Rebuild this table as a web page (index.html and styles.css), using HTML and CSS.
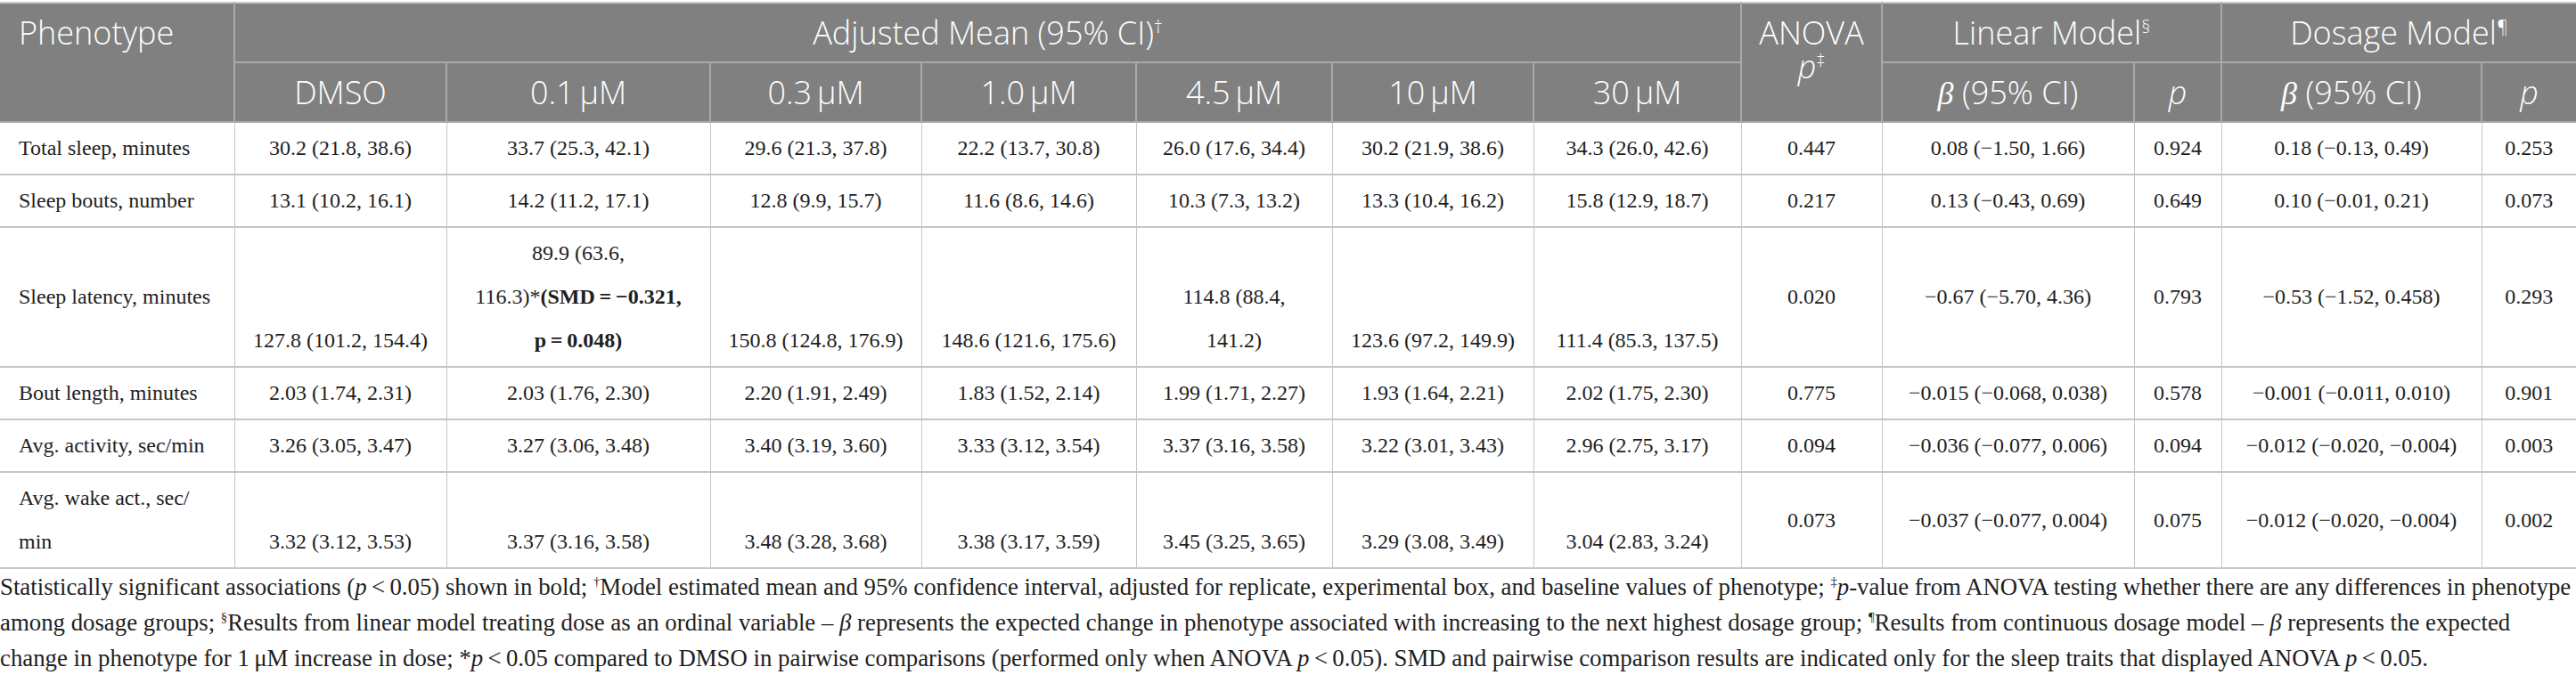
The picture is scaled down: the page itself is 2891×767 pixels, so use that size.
FILE: index.html
```html
<!DOCTYPE html>
<html lang="en">

<head>
    <meta charset="UTF-8">
    <meta name="viewport" content="width=device-width, initial-scale=1.0">
    <title>Sleep phenotypes by dose</title>
    <link rel="stylesheet" href="styles.css">
</head>

<body>
    <div class="page">
        <table class="results">
            <colgroup>
                <col class="w-label">
                <col class="w-dmso">
                <col class="w-01">
                <col class="w-03">
                <col class="w-10">
                <col class="w-45">
                <col class="w-100">
                <col class="w-300">
                <col class="w-anova">
                <col class="w-lin">
                <col class="w-linp">
                <col class="w-dos">
                <col class="w-dosp">
            </colgroup>
            <thead>
                <tr>
                    <th class="label" rowspan="2">Phenotype</th>
                    <th colspan="7">Adjusted Mean (95% CI)<sup>†</sup></th>
                    <th rowspan="2">ANOVA<br><i>p</i><sup>‡</sup></th>
                    <th colspan="2">Linear Model<sup>§</sup></th>
                    <th colspan="2">Dosage Model<sup>¶</sup></th>
                </tr>
                <tr>
                    <th>DMSO</th>
                    <th>0.1&#8201;μM</th>
                    <th>0.3&#8201;μM</th>
                    <th>1.0&#8201;μM</th>
                    <th>4.5&#8201;μM</th>
                    <th>10&#8201;μM</th>
                    <th>30&#8201;μM</th>
                    <th><i class="beta">β</i> (95% CI)</th>
                    <th><i>p</i></th>
                    <th><i class="beta">β</i> (95% CI)</th>
                    <th><i>p</i></th>
                </tr>
            </thead>
            <tbody>
                <tr>
                    <td class="label">Total sleep, minutes</td>
                    <td class="mean">30.2 (21.8, 38.6)</td>
                    <td class="mean">33.7 (25.3, 42.1)</td>
                    <td class="mean">29.6 (21.3, 37.8)</td>
                    <td class="mean">22.2 (13.7, 30.8)</td>
                    <td class="mean">26.0 (17.6, 34.4)</td>
                    <td class="mean">30.2 (21.9, 38.6)</td>
                    <td class="mean">34.3 (26.0, 42.6)</td>
                    <td>0.447</td>
                    <td>0.08 (−1.50, 1.66)</td>
                    <td>0.924</td>
                    <td>0.18 (−0.13, 0.49)</td>
                    <td>0.253</td>
                </tr>
                <tr>
                    <td class="label">Sleep bouts, number</td>
                    <td class="mean">13.1 (10.2, 16.1)</td>
                    <td class="mean">14.2 (11.2, 17.1)</td>
                    <td class="mean">12.8 (9.9, 15.7)</td>
                    <td class="mean">11.6 (8.6, 14.6)</td>
                    <td class="mean">10.3 (7.3, 13.2)</td>
                    <td class="mean">13.3 (10.4, 16.2)</td>
                    <td class="mean">15.8 (12.9, 18.7)</td>
                    <td>0.217</td>
                    <td>0.13 (−0.43, 0.69)</td>
                    <td>0.649</td>
                    <td>0.10 (−0.01, 0.21)</td>
                    <td>0.073</td>
                </tr>
                <tr>
                    <td class="label">Sleep latency, minutes</td>
                    <td class="mean">127.8 (101.2, 154.4)</td>
                    <td class="mean">89.9 (63.6,<br>116.3)*<b>(SMD&#8239;=&#8239;−0.321,<br>p&#8239;=&#8239;0.048)</b></td>
                    <td class="mean">150.8 (124.8, 176.9)</td>
                    <td class="mean">148.6 (121.6, 175.6)</td>
                    <td class="mean">114.8 (88.4,<br>141.2)</td>
                    <td class="mean">123.6 (97.2, 149.9)</td>
                    <td class="mean">111.4 (85.3, 137.5)</td>
                    <td>0.020</td>
                    <td>−0.67 (−5.70, 4.36)</td>
                    <td>0.793</td>
                    <td>−0.53 (−1.52, 0.458)</td>
                    <td>0.293</td>
                </tr>
                <tr>
                    <td class="label">Bout length, minutes</td>
                    <td class="mean">2.03 (1.74, 2.31)</td>
                    <td class="mean">2.03 (1.76, 2.30)</td>
                    <td class="mean">2.20 (1.91, 2.49)</td>
                    <td class="mean">1.83 (1.52, 2.14)</td>
                    <td class="mean">1.99 (1.71, 2.27)</td>
                    <td class="mean">1.93 (1.64, 2.21)</td>
                    <td class="mean">2.02 (1.75, 2.30)</td>
                    <td>0.775</td>
                    <td>−0.015 (−0.068, 0.038)</td>
                    <td>0.578</td>
                    <td>−0.001 (−0.011, 0.010)</td>
                    <td>0.901</td>
                </tr>
                <tr>
                    <td class="label">Avg. activity, sec/min</td>
                    <td class="mean">3.26 (3.05, 3.47)</td>
                    <td class="mean">3.27 (3.06, 3.48)</td>
                    <td class="mean">3.40 (3.19, 3.60)</td>
                    <td class="mean">3.33 (3.12, 3.54)</td>
                    <td class="mean">3.37 (3.16, 3.58)</td>
                    <td class="mean">3.22 (3.01, 3.43)</td>
                    <td class="mean">2.96 (2.75, 3.17)</td>
                    <td>0.094</td>
                    <td>−0.036 (−0.077, 0.006)</td>
                    <td>0.094</td>
                    <td>−0.012 (−0.020, −0.004)</td>
                    <td>0.003</td>
                </tr>
                <tr>
                    <td class="label">Avg. wake act., sec/<br>min</td>
                    <td class="mean">3.32 (3.12, 3.53)</td>
                    <td class="mean">3.37 (3.16, 3.58)</td>
                    <td class="mean">3.48 (3.28, 3.68)</td>
                    <td class="mean">3.38 (3.17, 3.59)</td>
                    <td class="mean">3.45 (3.25, 3.65)</td>
                    <td class="mean">3.29 (3.08, 3.49)</td>
                    <td class="mean">3.04 (2.83, 3.24)</td>
                    <td>0.073</td>
                    <td>−0.037 (−0.077, 0.004)</td>
                    <td>0.075</td>
                    <td>−0.012 (−0.020, −0.004)</td>
                    <td>0.002</td>
                </tr>
            </tbody>
        </table>

        <p class="notes">Statistically significant associations (<i>p</i>&#8239;&lt;&#8239;0.05) shown in bold; <sup>†</sup>Model estimated mean and 95% confidence interval, adjusted for replicate, experimental box, and baseline values of phenotype; <sup>‡</sup><i>p</i>-value from ANOVA testing whether there are any differences in phenotype among dosage groups; <sup>§</sup>Results from linear model treating dose as an ordinal variable – <i>β</i> represents the expected change in phenotype associated with increasing to the next highest dosage group; <sup>¶</sup>Results from continuous dosage model – <i>β</i> represents the expected change in phenotype for 1&#8201;μM increase in dose; *<i>p</i>&#8239;&lt;&#8239;0.05 compared to DMSO in pairwise comparisons (performed only when ANOVA <i>p</i>&#8239;&lt;&#8239;0.05). SMD and pairwise comparison results are indicated only for the sleep traits that displayed ANOVA <i>p</i>&#8239;&lt;&#8239;0.05.</p>
    </div>
</body>

</html>
```

FILE: styles.css
```css
html,
body {
    margin: 0;
    padding: 0;
    background-color: #fff;
    color: #1e1e1e;
    font-family: "Liberation Serif", "Times New Roman", serif;
    font-size: 24px;
}

.page {
    padding-top: 2px;
}

.results {
    width: 2891px;
    table-layout: fixed;
    border-collapse: collapse;
    border-top: 2px solid #c9c9c9;
}

/* column widths */
.w-label { width: 263px; }
.w-dmso { width: 238px; }
.w-01 { width: 296px; }
.w-03 { width: 237px; }
.w-10 { width: 241px; }
.w-45 { width: 220px; }
.w-100 { width: 226px; }
.w-300 { width: 233px; }
.w-anova { width: 158px; }
.w-lin { width: 283px; }
.w-linp { width: 98px; }
.w-dos { width: 292px; }
.w-dosp { width: 106px; }

.results th {
    background-color: #808080;
    color: #fff;
    font-family: "Open Sans", "DejaVu Sans", sans-serif;
    font-weight: 300;
    font-size: 36px;
    line-height: 38px;
    height: 38px;
    padding: 14px 6px 13px;
    text-align: center;
    vertical-align: top;
    border: 2px solid #a9a9a9;
    border-top: none;
}

.results th:first-child {
    border-left: none;
}

.results th:last-child {
    border-right: none;
}

.results th.label {
    text-align: left;
    padding-left: 21px;
}

.results th .beta {
    font-family: "Liberation Serif", serif;
    line-height: 30px;
}

.results td {
    line-height: 49px;
    padding: 4px 19px;
    text-align: center;
    vertical-align: middle;
    border-left: 1px solid #c6c6c6;
    border-right: 1px solid #c6c6c6;
    border-bottom: 2px solid #c6c6c6;
}

.results td:first-child {
    border-left: none;
}

.results td:last-child {
    border-right: none;
}

.results td.label {
    text-align: left;
    padding: 4px 12px 4px 21px;
}

.results td.mean {
    vertical-align: bottom;
}

sup {
    font-size: 55%;
    line-height: 0;
    vertical-align: super;
}

.notes {
    margin: 0;
    line-height: 40px;
    font-size: 26.8px;
}
```
